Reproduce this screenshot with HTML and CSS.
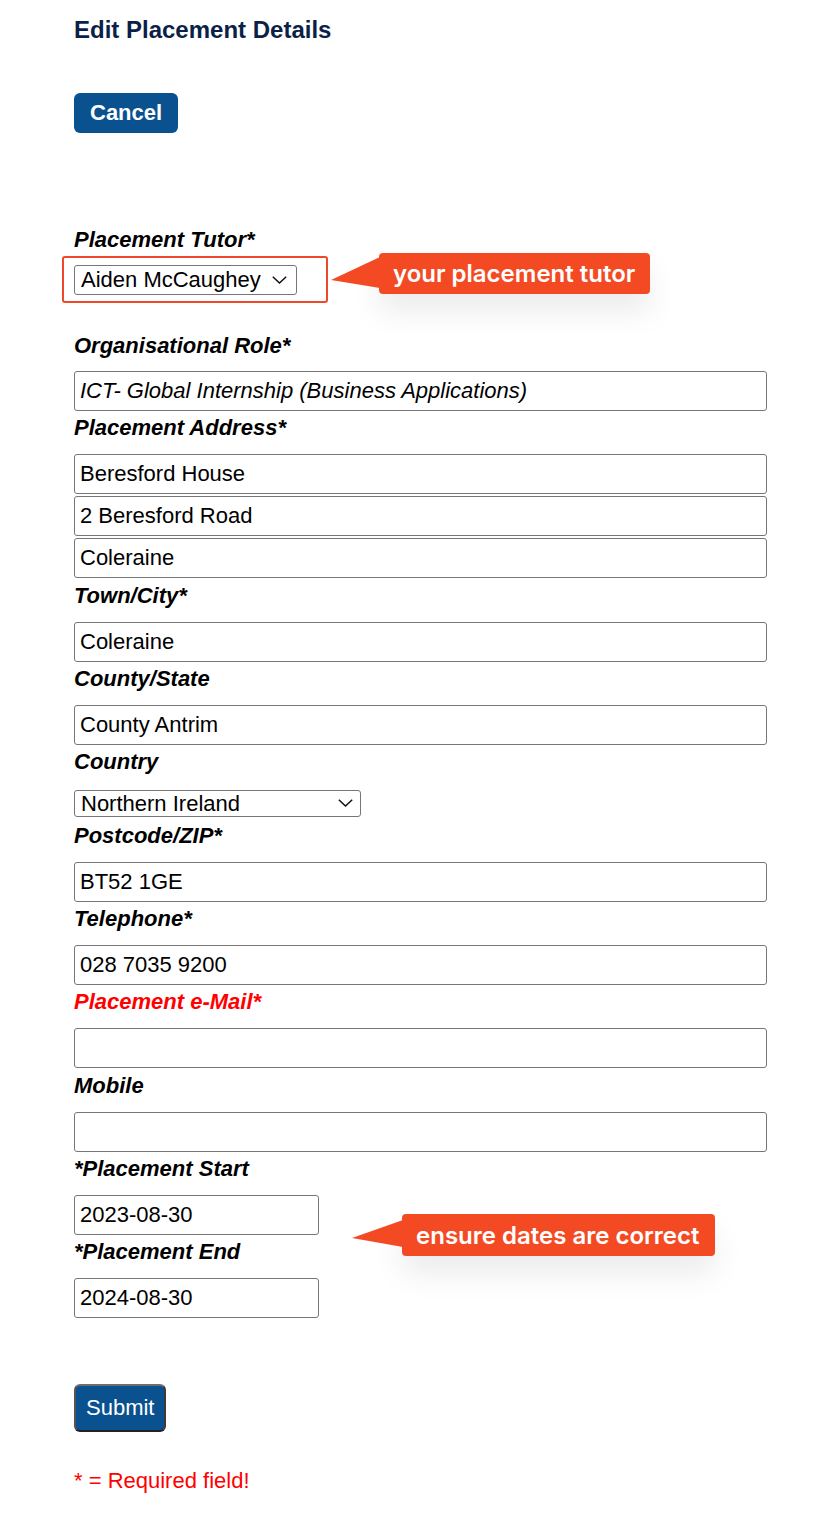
FILE: index.html
```html
<!DOCTYPE html>
<html lang="en">
<head>
<meta charset="utf-8">
<title>Edit Placement Details</title>
<link rel="stylesheet" href="styles.css">
</head>
<body>
<div class="page">
  <h1 class="title">Edit Placement Details</h1>
  <button class="btn-cancel" type="button">Cancel</button>

  <form class="form">
    <label class="lbl lbl-first">Placement Tutor*</label>
    <div class="highlight">
      <span class="select-wrap select-tutor">
        <select class="select"><option>Aiden McCaughey</option></select>
        <svg class="chev" width="15" height="8" viewBox="0 0 15 8"><polyline points="0.8,0.8 7.5,7 14.2,0.8" fill="none" stroke="#111" stroke-width="1.5"/></svg>
      </span>
    </div>

    <label class="lbl lbl-after-hl">Organisational Role*</label>
    <input class="inp inp-italic" type="text" value="ICT- Global Internship (Business Applications)">

    <label class="lbl">Placement Address*</label>
    <input class="inp" type="text" value="Beresford House">
    <input class="inp inp-stack" type="text" value="2 Beresford Road">
    <input class="inp inp-stack" type="text" value="Coleraine">

    <label class="lbl">Town/City*</label>
    <input class="inp" type="text" value="Coleraine">

    <label class="lbl">County/State</label>
    <input class="inp" type="text" value="County Antrim">

    <label class="lbl">Country</label>
    <span class="select-wrap select-country">
      <select class="select"><option>Northern Ireland</option></select>
      <svg class="chev" width="15" height="8" viewBox="0 0 15 8"><polyline points="0.8,0.8 7.5,7 14.2,0.8" fill="none" stroke="#111" stroke-width="1.5"/></svg>
    </span>

    <label class="lbl">Postcode/ZIP*</label>
    <input class="inp" type="text" value="BT52 1GE">

    <label class="lbl">Telephone*</label>
    <input class="inp" type="text" value="028 7035 9200">

    <label class="lbl lbl-red">Placement e-Mail*</label>
    <input class="inp" type="text" value="">

    <label class="lbl">Mobile</label>
    <input class="inp" type="text" value="">

    <label class="lbl">*Placement Start</label>
    <input class="inp inp-date" type="text" value="2023-08-30">

    <label class="lbl">*Placement End</label>
    <input class="inp inp-date" type="text" value="2024-08-30">

    <div class="submit-row">
      <button class="btn-submit" type="button">Submit</button>
    </div>
    <p class="required">* = Required field!</p>
  </form>

  <div class="callout callout-tutor">
    <svg class="callout-arrow arrow-tutor" width="49" height="31" viewBox="0 0 49 31"><polygon points="0,23 49,0 49,31" fill="#f44a24"/></svg>
    your placement tutor
  </div>
  <div class="callout callout-dates">
    <svg class="callout-arrow arrow-dates" width="51" height="27" viewBox="0 0 51 27"><polygon points="0,18 51,0 51,27" fill="#f44a24"/></svg>
    ensure dates are correct
  </div>
</div>
</body>
</html>
```

FILE: styles.css
```css
* { box-sizing: border-box; }

html, body {
  margin: 0;
  padding: 0;
  background: #ffffff;
}

body {
  font-family: "Liberation Sans", Arial, Helvetica, sans-serif;
  color: #000;
}

.page {
  position: relative;
  padding: 16px 0 40px 74px;
  min-height: 1514px;
}

.title {
  margin: 0;
  font-size: 24px;
  line-height: 28px;
  font-weight: bold;
  color: #0b1f47;
}

.btn-cancel {
  display: block;
  margin-top: 49px;
  height: 40px;
  padding: 0 16px;
  border: none;
  border-radius: 6px;
  background: #0a5190;
  color: #fff;
  font-family: "Liberation Sans", Arial, sans-serif;
  font-size: 22px;
  font-weight: bold;
  line-height: 40px;
}

.form {
  display: flex;
  flex-direction: column;
  align-items: flex-start;
  margin: 0;
}

.lbl {
  display: block;
  margin: 5.25px 0 14px;
  font-size: 22px;
  line-height: 24px;
  font-weight: bold;
  font-style: italic;
}

.lbl-first { margin-top: 95px; margin-bottom: 4px; }
.lbl-after-hl { margin-top: 31px; margin-bottom: 13px; }
.lbl-red { color: #ff0000; }

.highlight {
  margin-left: -12px;
  width: 266px;
  height: 47px;
  padding: 7px 0 0 10px;
  border: 2px solid #f0482a;
  border-radius: 3px;
}

.select-wrap {
  position: relative;
  display: inline-block;
}

.select {
  display: block;
  -webkit-appearance: none;
  appearance: none;
  margin: 0;
  border: 1px solid #767676;
  border-radius: 3px;
  background: #fff;
  color: #000;
  font-family: "Liberation Sans", Arial, sans-serif;
  font-size: 22px;
  padding: 0 0 0 6px;
}

.select-tutor .select { width: 223px; height: 30px; line-height: 28px; }
.select-tutor .chev { position: absolute; right: 10px; top: 11px; pointer-events: none; }

.select-country { margin: 1.5px 0 2px; }
.select-country .select { width: 287px; height: 27px; line-height: 25px; }
.select-country .chev { position: absolute; right: 8px; top: 9px; pointer-events: none; }

.inp {
  display: block;
  width: 693px;
  height: 40px;
  margin: 0;
  padding: 0 5px;
  border: 1px solid #767676;
  border-radius: 3px;
  font-family: "Liberation Sans", Arial, sans-serif;
  font-size: 22px;
  color: #000;
  background: #fff;
}

.inp-italic { font-style: italic; }
.inp-stack { margin-top: 2px; }
.inp-date { width: 245px; }

.submit-row { margin-top: 66px; }

.btn-submit {
  display: block;
  height: 48px;
  padding: 0 10px;
  border: 2px solid;
  border-color: #6e6e6e #3a3a3a #222 #555;
  border-radius: 6px;
  background: #0a5190;
  color: #fff;
  font-family: "Liberation Sans", Arial, sans-serif;
  font-size: 22px;
  line-height: 44px;
}

.required {
  margin: 36px 0 0;
  font-size: 22px;
  line-height: 25px;
  color: #ff0000;
}

.callout {
  position: absolute;
  display: flex;
  align-items: center;
  padding: 0 14px;
  background: #f44a24;
  color: #fff;
  border-radius: 4px;
  font-family: Inter, "Liberation Sans", sans-serif;
  font-weight: 600;
  font-size: 24px;
  white-space: nowrap;
  box-shadow: 0 18px 30px rgba(0, 0, 0, 0.08);
}

.callout-tutor { left: 379px; top: 253px; width: 271px; height: 41px; }
.callout-dates { left: 402px; top: 1214px; width: 313px; height: 42px; }

.callout-arrow { position: absolute; }
.arrow-tutor { left: -48px; top: 4px; }
.arrow-dates { left: -50px; top: 6px; }
```
